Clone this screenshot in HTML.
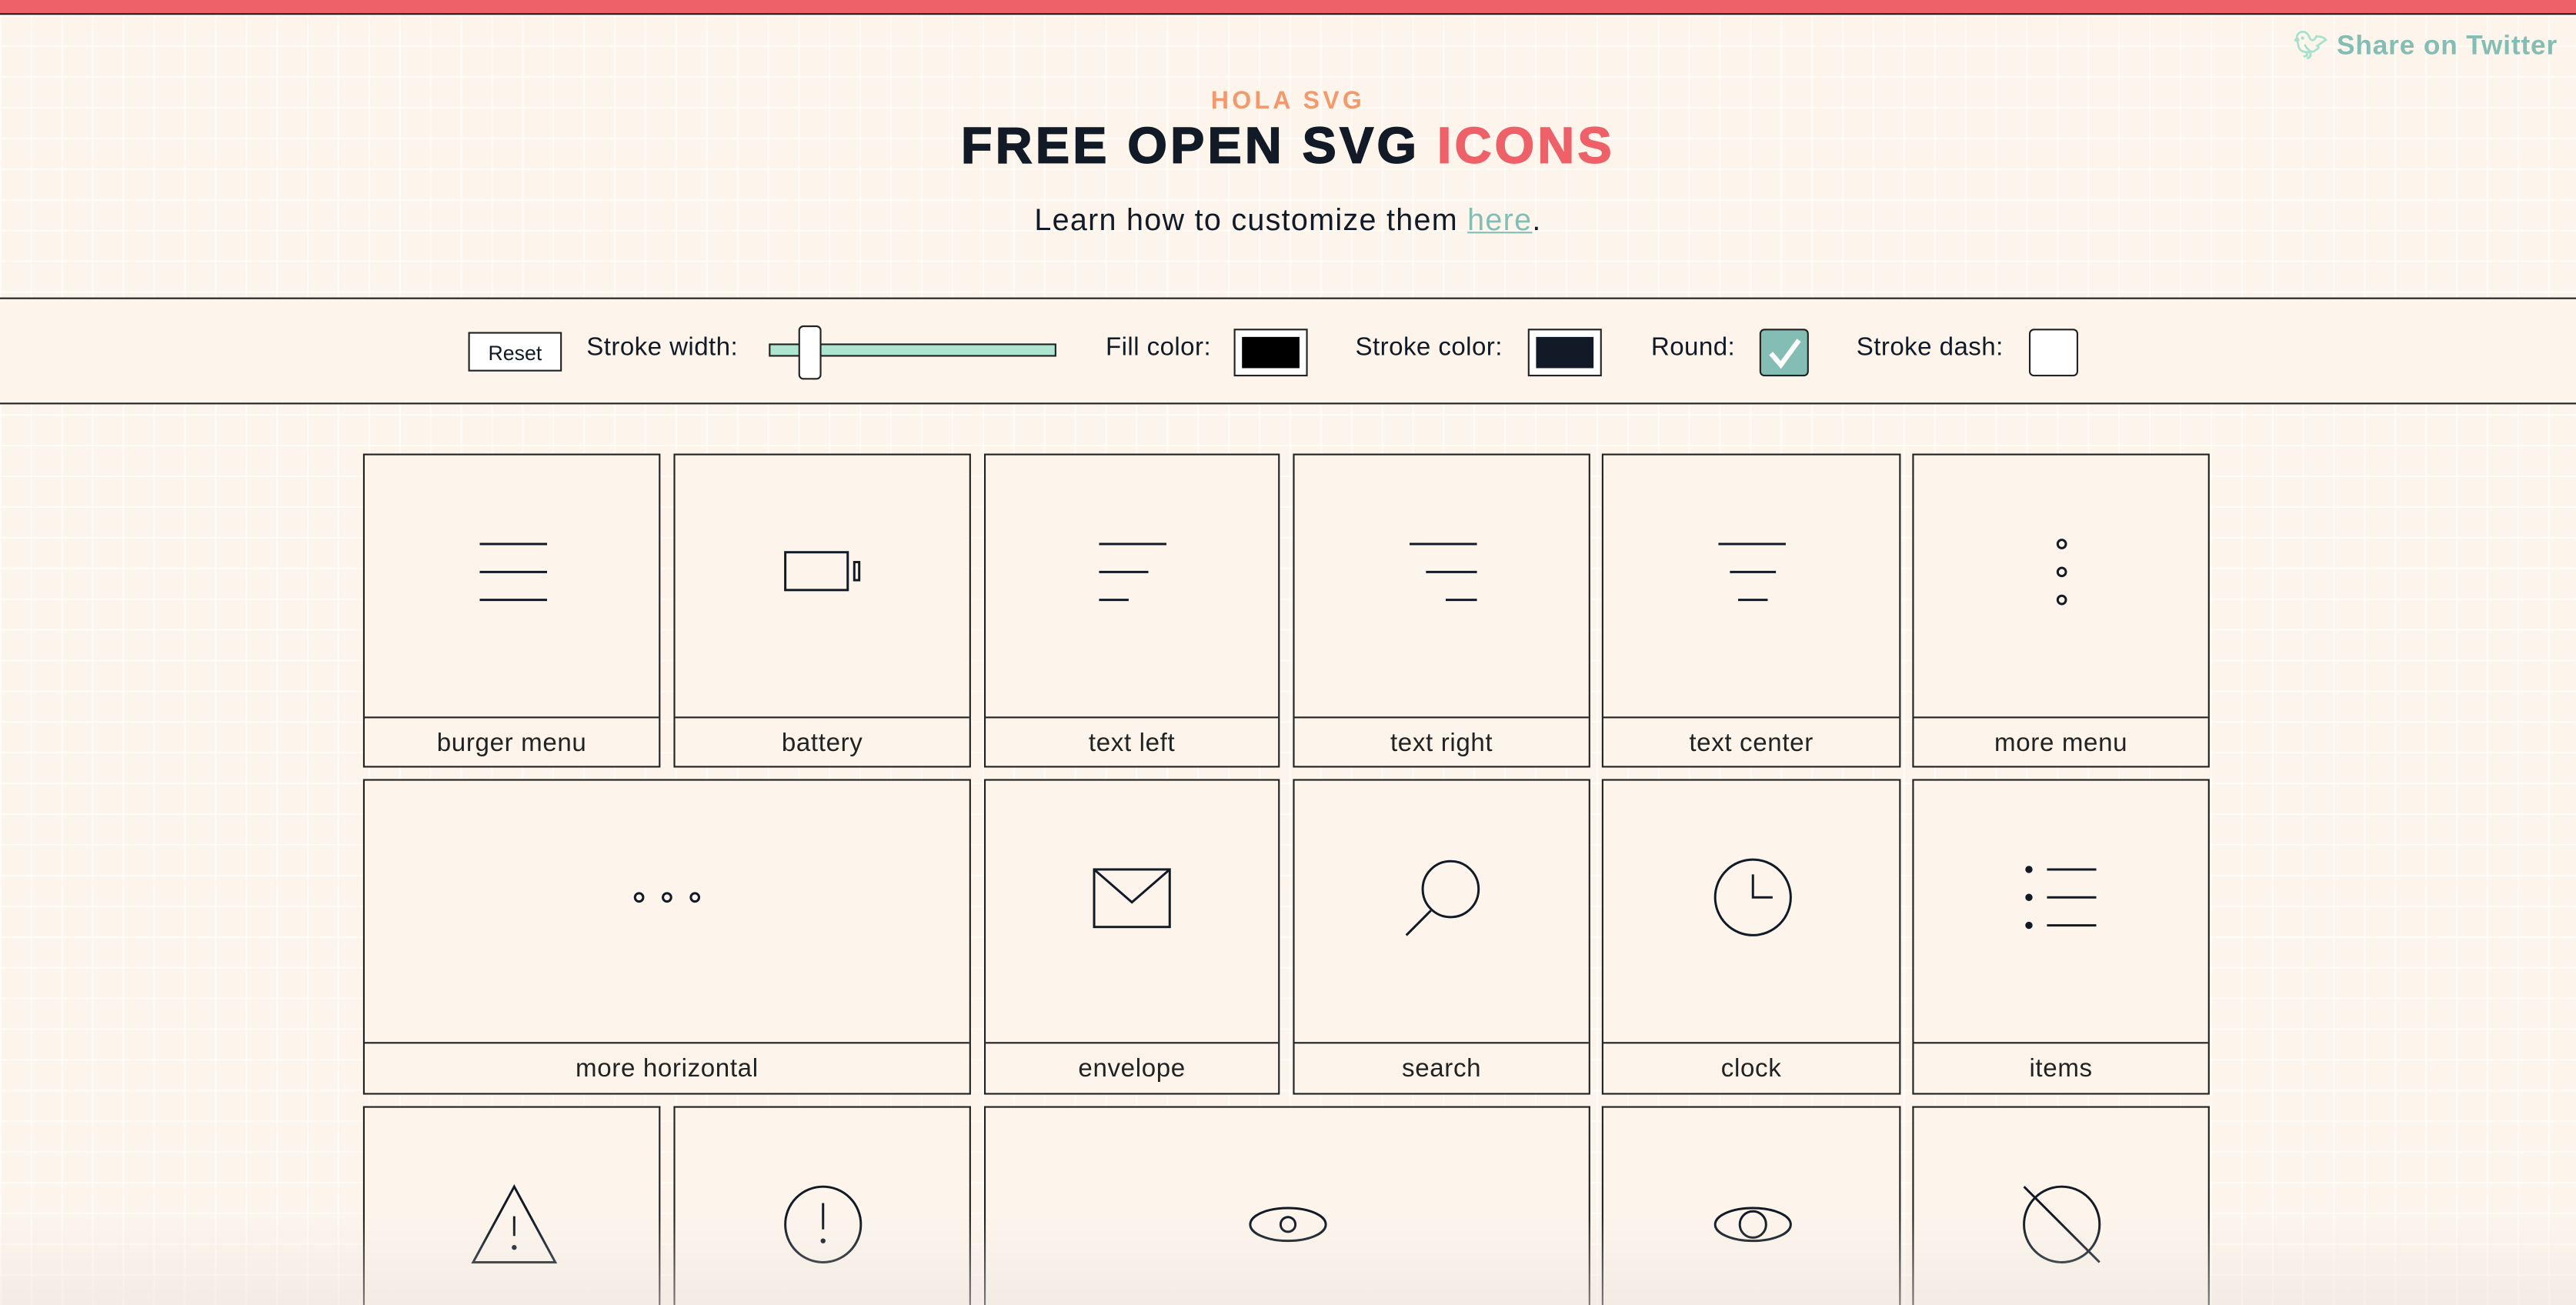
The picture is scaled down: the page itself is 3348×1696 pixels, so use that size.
<!DOCTYPE html>
<html><head><meta charset="utf-8"><style>
html,body{margin:0;padding:0;width:3348px;height:1696px;overflow:hidden;background:#fdf5ec}
#w{position:absolute;left:0;top:0;width:1568px;height:793.9px;overflow:hidden;transform:scale(2.1352,2.1360);transform-origin:0 0;font-family:"Liberation Sans",sans-serif;color:#111a26;
background-color:#fdf5ec;background-image:linear-gradient(rgba(255,255,255,.6) 1px,transparent 1px),linear-gradient(90deg,rgba(255,255,255,.6) 1px,transparent 1px);background-size:18.7px 18.7px;background-position:0 9px}
.top{position:absolute;left:0;top:0;width:1568px;height:8px;background:#ee6169;border-bottom:1.5px solid #222}
.tw{position:absolute;left:1396px;top:19px;font-weight:bold;font-size:16.5px;color:#84bdb4;letter-spacing:.4px}
.h1{position:absolute;left:0;width:1568px;text-align:center}
.bar{position:absolute;left:0;top:181px;width:1568px;height:63px;border-top:1.3px solid #222;border-bottom:1.3px solid #222;background:#fdf5ec}
.c{position:absolute;border:1px solid #222;background:#fdf5ec;box-sizing:border-box}
.c svg{position:absolute;left:0;top:0}
.c .l{position:absolute;left:0;right:0;top:159px;height:30px;border-top:1px solid #222;text-align:center;font-size:15.5px;line-height:31px;color:#222;letter-spacing:.3px}
svg *{fill:none;stroke:#111a26;stroke-width:1.4}
.fade{position:absolute;left:0;top:740px;width:1568px;height:54px;background:linear-gradient(rgba(230,225,220,0),rgba(230,225,220,.45))}
.lab{position:absolute;top:21px;font-size:15.5px;letter-spacing:.2px}
</style></head><body><div id="w">
<div class="top"></div>
<div class="tw"><span style="color:#a8e2cf">&#x1F426;&#xFE0E;</span> Share on Twitter</div>
<div class="h1" style="top:53px;font-size:15px;font-weight:bold;color:#f29a6e;letter-spacing:2px">HOLA SVG</div>
<div class="h1" style="top:71px;font-size:31px;font-weight:900;letter-spacing:2px;-webkit-text-stroke:0.8px #111a26">FREE OPEN SVG <span style="color:#ee6169;-webkit-text-stroke:0.8px #ee6169">ICONS</span></div>
<div class="h1" style="top:123px;font-size:18.5px;letter-spacing:.6px">Learn how to customize them <span style="color:#84bdb4;text-decoration:underline">here</span>.</div>
<div class="bar">
<div style="position:absolute;left:285px;top:20px;width:57px;height:24px;border:1px solid #222;background:#fff;font-size:12.5px;line-height:24px;text-align:center;box-sizing:border-box">Reset</div>
<div class="lab" style="left:357px">Stroke width:</div>
<div style="position:absolute;left:468px;top:27px;width:175px;height:8px;background:#ade5d0;border:1px solid #222;box-sizing:border-box"></div>
<div style="position:absolute;left:486px;top:16px;width:14px;height:33px;background:#fff;border:1px solid #222;border-radius:3px;box-sizing:border-box"></div>
<div class="lab" style="left:673px">Fill color:</div>
<div style="position:absolute;left:751px;top:18px;width:45px;height:29px;border:1.3px solid #222;background:#fff;box-sizing:border-box;padding:4px"><div style="background:#000;width:100%;height:100%"></div></div>
<div class="lab" style="left:825px">Stroke color:</div>
<div style="position:absolute;left:930px;top:18px;width:45px;height:29px;border:1.3px solid #222;background:#fff;box-sizing:border-box;padding:4px"><div style="background:#111a26;width:100%;height:100%"></div></div>
<div class="lab" style="left:1005px">Round:</div>
<div style="position:absolute;left:1071px;top:18px;width:30px;height:29px;border:1.3px solid #222;background:#84bdb4;border-radius:3px;box-sizing:border-box"><svg width="28" height="27"><path d="M6 14l6 7L23 6" style="stroke:#fff;stroke-width:3"/></svg></div>
<div class="lab" style="left:1130px">Stroke dash:</div>
<div style="position:absolute;left:1235px;top:18px;width:30px;height:29px;border:1.3px solid #222;background:#fff;border-radius:3px;box-sizing:border-box"></div>
</div>

<div class="c" style="left:221px;top:276px;width:181px;height:191px"><svg width="180" height="160"><path d="M70 54h41M70 71h41M70 88h41"/></svg><div class="l">burger menu</div></div>
<div class="c" style="left:410px;top:276px;width:181px;height:191px"><svg width="180" height="160"><rect x="67" y="59" width="38" height="23"/><rect x="109" y="65" width="3" height="11"/></svg><div class="l">battery</div></div>
<div class="c" style="left:599px;top:276px;width:180px;height:191px"><svg width="180" height="160"><path d="M69 54h41M69 71h30M69 88h18"/></svg><div class="l">text left</div></div>
<div class="c" style="left:787px;top:276px;width:181px;height:191px"><svg width="180" height="160"><path d="M70 54h41M80 71h31M92 88h19"/></svg><div class="l">text right</div></div>
<div class="c" style="left:975px;top:276px;width:182px;height:191px"><svg width="180" height="160"><path d="M70 54h41M77 71h28M82 88h18"/></svg><div class="l">text center</div></div>
<div class="c" style="left:1164px;top:276px;width:181px;height:191px"><svg width="180" height="160"><circle cx="90" cy="54" r="2.5"/><circle cx="90" cy="71" r="2.5"/><circle cx="90" cy="88" r="2.5"/></svg><div class="l">more menu</div></div>

<div class="c" style="left:221px;top:474px;width:370px;height:192px"><svg width="370" height="160"><circle cx="167" cy="71" r="2.5"/><circle cx="184" cy="71" r="2.5"/><circle cx="201" cy="71" r="2.5"/></svg><div class="l">more horizontal</div></div>
<div class="c" style="left:599px;top:474px;width:180px;height:192px"><svg width="180" height="160"><rect x="66" y="54" width="46" height="35"/><path d="M66 54l23 20 23-20"/></svg><div class="l">envelope</div></div>
<div class="c" style="left:787px;top:474px;width:181px;height:192px"><svg width="180" height="160"><circle cx="95" cy="66" r="17"/><path d="M83 79L68 94"/></svg><div class="l">search</div></div>
<div class="c" style="left:975px;top:474px;width:182px;height:192px"><svg width="180" height="160"><circle cx="91" cy="71" r="23"/><path d="M91 57v14h12"/></svg><div class="l">clock</div></div>
<div class="c" style="left:1164px;top:474px;width:181px;height:192px"><svg width="180" height="160"><circle cx="70" cy="54" r="1.5" style="fill:#111a26"/><circle cx="70" cy="71" r="1.5" style="fill:#111a26"/><circle cx="70" cy="88" r="1.5" style="fill:#111a26"/><path d="M81 54h30M81 71h30M81 88h30"/></svg><div class="l">items</div></div>

<div class="c" style="left:221px;top:673px;width:181px;height:121px;border-bottom:0"><svg width="180" height="160"><path d="M91 48L66 94h50z"/><path d="M91 66v12"/><circle cx="91" cy="85" r="0.8" style="fill:#111a26"/></svg></div>
<div class="c" style="left:410px;top:673px;width:181px;height:121px;border-bottom:0"><svg width="180" height="160"><circle cx="90" cy="71" r="23"/><path d="M90 58v16"/><circle cx="90" cy="81" r="0.8" style="fill:#111a26"/></svg></div>
<div class="c" style="left:599px;top:673px;width:369px;height:121px;border-bottom:0"><svg width="369" height="160"><ellipse cx="184" cy="71" rx="23" ry="10"/><circle cx="184" cy="71" r="4.5"/></svg></div>
<div class="c" style="left:975px;top:673px;width:182px;height:121px;border-bottom:0"><svg width="180" height="160"><ellipse cx="91" cy="71" rx="23" ry="10"/><circle cx="91" cy="71" r="8"/></svg></div>
<div class="c" style="left:1164px;top:673px;width:181px;height:121px;border-bottom:0"><svg width="180" height="160"><circle cx="90" cy="71" r="23"/><path d="M67 48l46 46"/></svg></div>
<div class="fade"></div>
</div></body></html>
